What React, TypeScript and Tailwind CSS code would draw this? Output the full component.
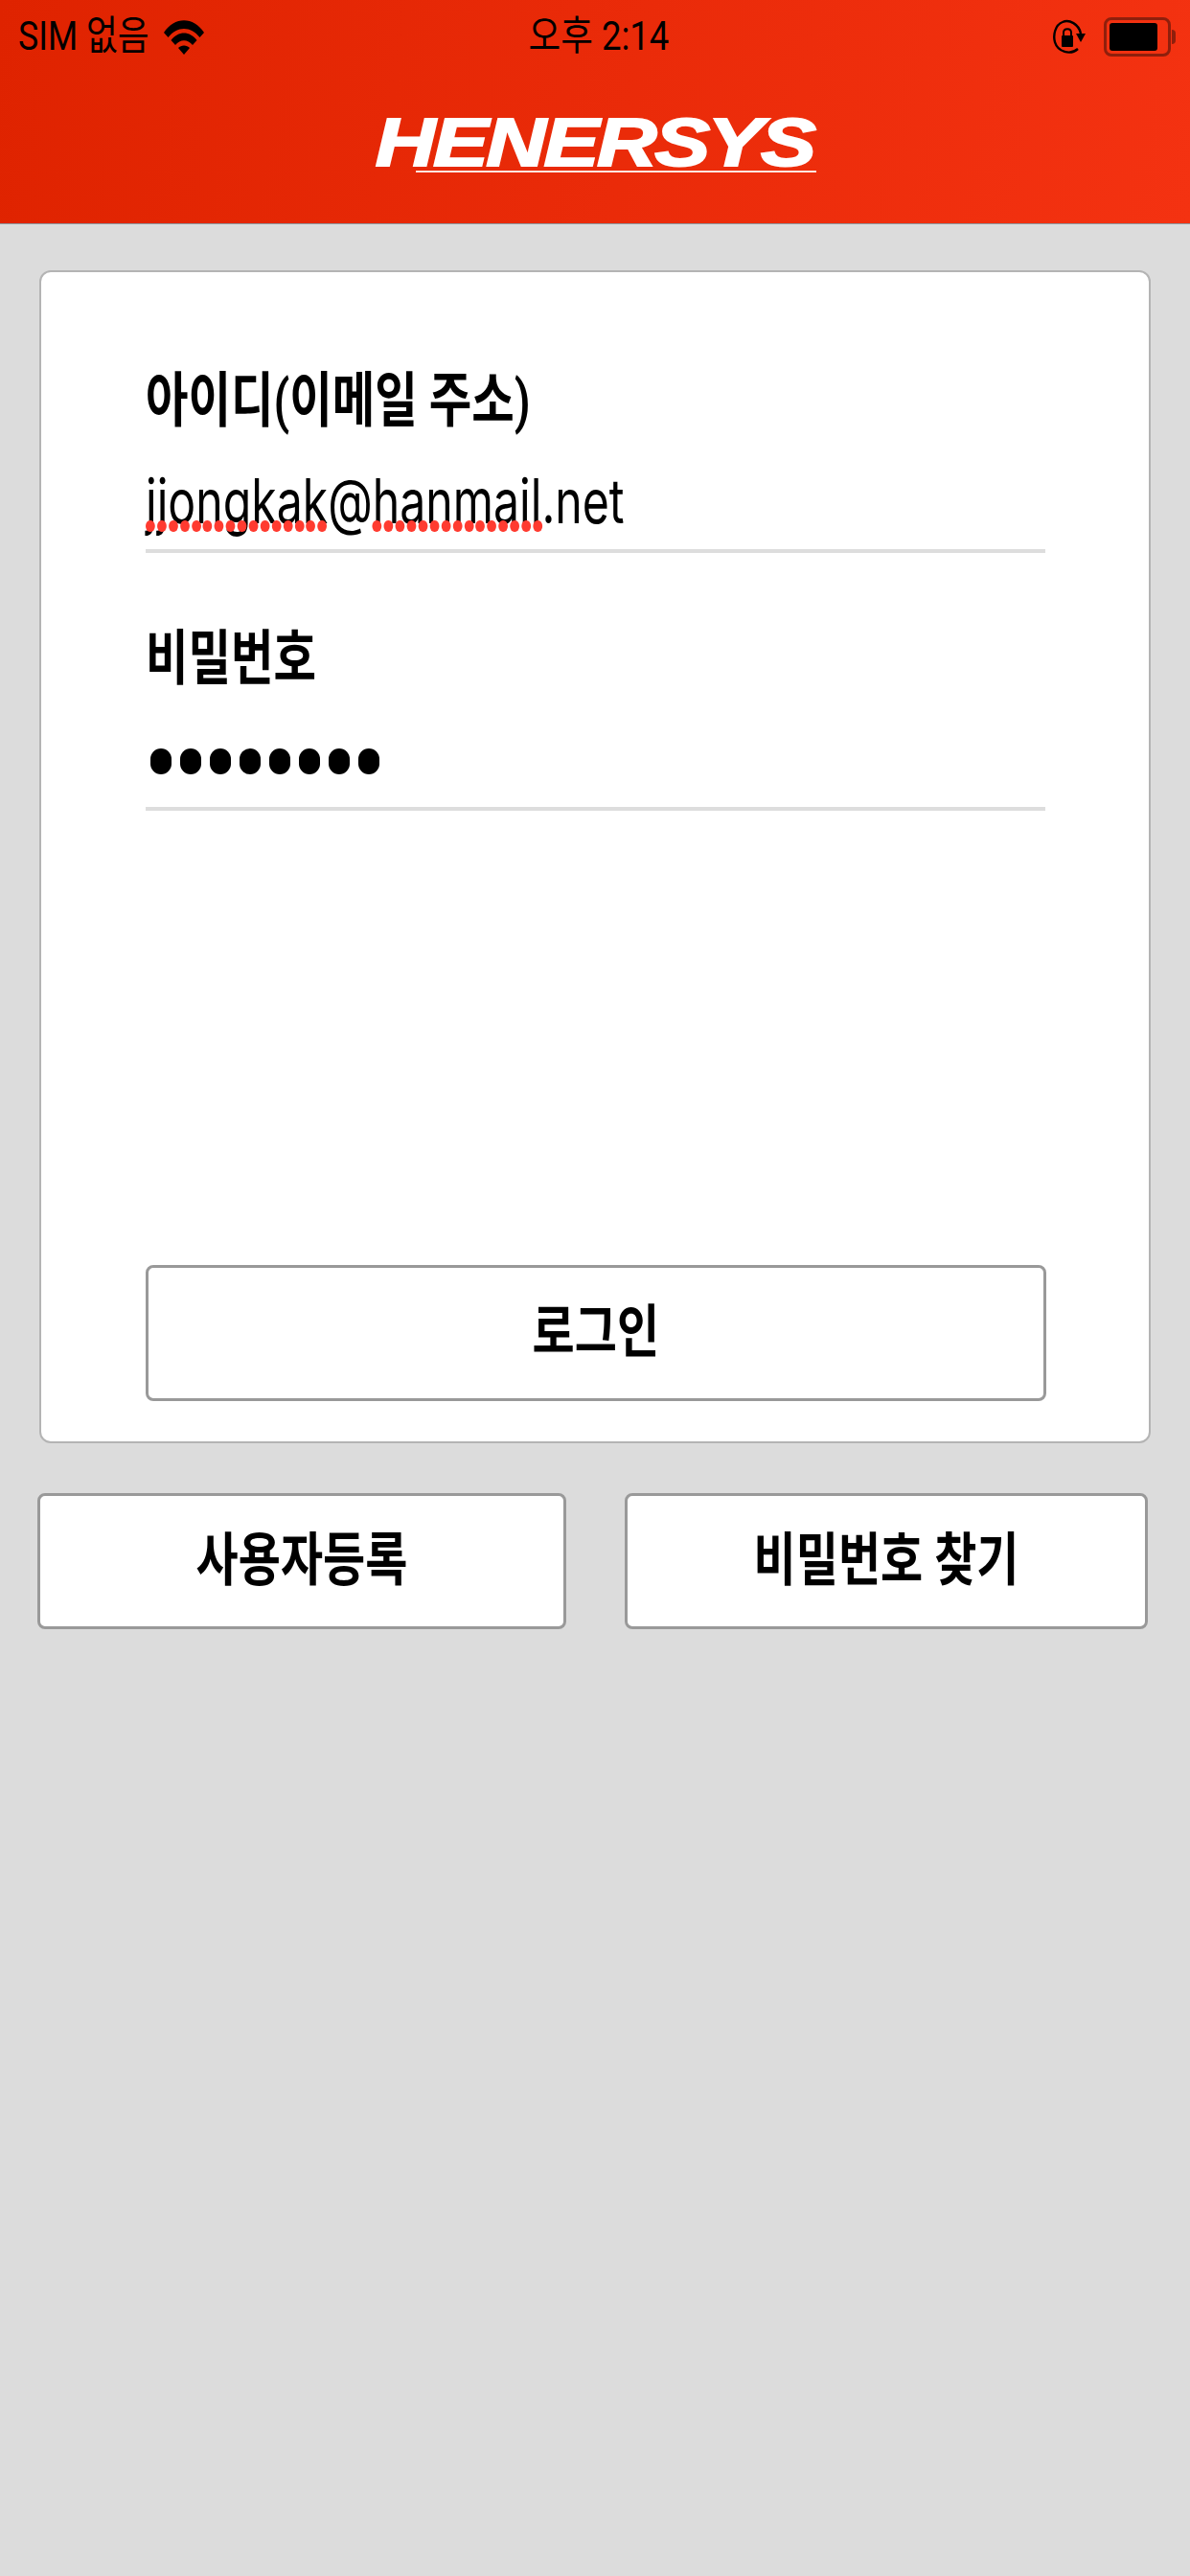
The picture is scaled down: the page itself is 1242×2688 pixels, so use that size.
import React, { FC } from 'react';

const KR = "font-['Roboto','Noto_Sans_CJK_KR',sans-serif]";

const SpellDots: FC<{ count: number }> = ({ count }) => (
    <span className="absolute left-0 top-[59px] flex gap-[2.9px]">
        {Array.from({ length: count }).map((_, i) => (
            <span key={i} className="block w-[13px] h-[12px] rounded-full bg-[#ff3b30]" />
        ))}
    </span>
);

const WifiIcon = () => (
    <svg width="42" height="37" viewBox="0 0 42 37" fill="#000">
        <path d="M0 14 C11 -3 31 -3 42 14 L37.5 19 C28 7 14 7 4.5 19 Z" />
        <path d="M7.5 22 C15 12 27 12 34.5 22 L30 27 C25 20.5 17 20.5 12 27 Z" />
        <path d="M15 30 C18 26.5 24 26.5 27 30 L21 37 Z" />
    </svg>
);

const RotationLockIcon = () => (
    <svg width="34" height="37" viewBox="0 0 34 37" fill="none">
        <path d="M29 15 C27 5 17 0 10 3 C2 6 0 17 2 24 C5 34 18 38 26 31" stroke="#000" strokeWidth="2.4" />
        <path d="M24 15 L34 15 L29 24 Z" fill="#000" />
        <rect x="9" y="17" width="12" height="12" rx="1" fill="#000" />
        <path d="M11 17 V14 C11 9 19 9 19 14 V17" stroke="#000" strokeWidth="2" />
    </svg>
);

const Battery = () => (
    <div className="flex items-center">
        <div className="w-[70px] h-[41px] rounded-[8px] border-[3px] border-[#8f1f0c] p-[3px]">
            <div className="w-[50px] h-full rounded-[3px] bg-black" />
        </div>
        <div className="w-[4px] h-[15px] ml-[1px] rounded-r-full bg-[#8f1f0c]" />
    </div>
);

const OutlineButton: FC<{ label: string; className: string }> = ({ label, className }) => (
    <button className={`flex items-center justify-center h-[142px] bg-white border-[3px] border-[#999999] rounded-[8px] ${className}`}>
        <span className={`${KR} block text-[60px] leading-none font-semibold text-black whitespace-nowrap scale-x-[.8]`}>
            {label}
        </span>
    </button>
);

const App: FC = () => {
    return (
        <div className="flex flex-col w-[1242px] h-[2688px] bg-[#dcdcdc] overflow-hidden">
            <header className="h-[234px] bg-[linear-gradient(100deg,#df2300,#f43211)] border-b border-[#8b98a0]">
                <div className="relative flex items-center justify-between h-[76px] pl-[19px] pr-[15px]">
                    <div className="flex items-center">
                        <span className={`${KR} block w-[141px] text-[42px] leading-none text-black whitespace-nowrap origin-left scale-x-[.85]`}>
                            SIM 없음
                        </span>
                        <div className="ml-[11px]">
                            <WifiIcon />
                        </div>
                    </div>
                    <span className={`${KR} absolute left-[552px] w-[146px] flex justify-center text-[42px] leading-none text-black whitespace-nowrap scale-x-[.87]`}>
                        오후 2:14
                    </span>
                    <div className="flex items-center gap-[19px]">
                        <RotationLockIcon />
                        <Battery />
                    </div>
                </div>
                <div className="flex justify-center pt-[48px]">
                    <div className="relative w-[462px] h-[56px] flex justify-center">
                        <span className="block font-['Liberation_Sans',sans-serif] font-bold italic text-[70px] leading-[50px] text-white tracking-[-2px] scale-x-[1.24] [-webkit-text-stroke:2px_white]">
                            HENERSYS
                        </span>
                        <div className="absolute left-[44px] right-0 bottom-0 h-[2px] bg-[#ffe9e0]" />
                    </div>
                </div>
            </header>

            <main className="flex flex-col px-[39px] pt-[48px]">
                <section className="flex flex-col w-[1160px] h-[1224px] ml-[2px] pl-[109px] pr-[108px] pt-[100px] pb-[42px] bg-white border-2 border-[#b4b4b4] rounded-[12px]">
                    <label className={`${KR} block text-[62px] leading-[70px] font-semibold text-black whitespace-nowrap origin-left scale-x-[.78]`}>
                        아이디(이메일 주소)
                    </label>
                    <div className="flex items-end h-[123px] pb-[18px] border-b-4 border-[#dddddd]">
                        <span className="block font-['Inter',sans-serif] text-[64px] leading-[64px] text-black whitespace-nowrap origin-left scale-x-[.753]">
                            <span className="relative">
                                jjongkak
                                <SpellDots count={16} />
                            </span>
                            @
                            <span className="relative">
                                hanmail
                                <SpellDots count={15} />
                            </span>
                            .net
                        </span>
                    </div>
                    <label className={`${KR} block mt-[76px] text-[62px] leading-[70px] font-semibold text-black whitespace-nowrap origin-left scale-x-[.78]`}>
                        비밀번호
                    </label>
                    <div className="flex items-center gap-[9px] h-[123px] pl-[5px] pt-[24px] border-b-4 border-[#dddddd]">
                        {Array.from({ length: 8 }).map((_, i) => (
                            <span key={i} className="block w-[22px] h-[27px] rounded-full bg-black" />
                        ))}
                    </div>
                    <OutlineButton label="로그인" className="w-[940px] mt-auto" />
                </section>
                <div className="flex gap-[61px] mt-[52px]">
                    <OutlineButton label="사용자등록" className="w-[552px]" />
                    <OutlineButton label="비밀번호 찾기" className="w-[546px]" />
                </div>
            </main>
        </div>
    );
};

export default App;
